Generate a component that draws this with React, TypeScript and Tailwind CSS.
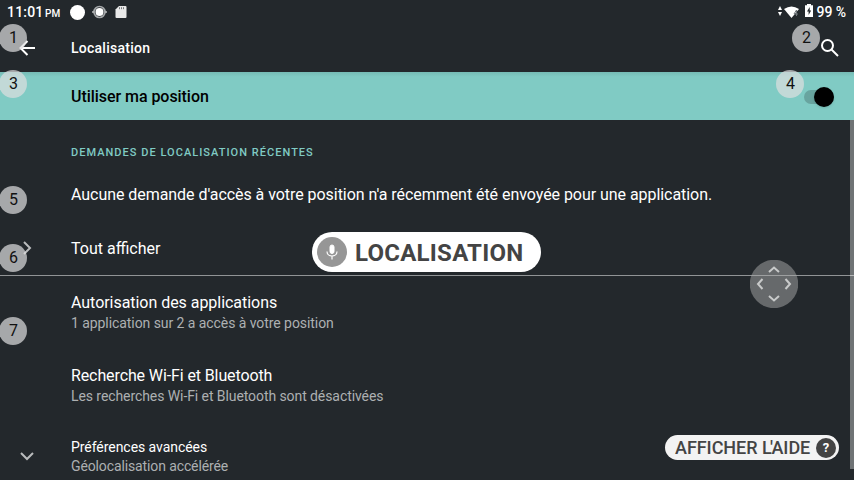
import React from "react";

function Badge({ n, className }: { n: number; className: string }) {
  return (
    <span
      className={`absolute flex size-7 items-center justify-center rounded-full bg-[#dedee0]/70 pb-px pl-px text-[16px] leading-none text-[#111] ${className}`}
    >
      {n}
    </span>
  );
}

function StatusBar() {
  return (
    <div className="flex h-6 items-center justify-between pr-2 pl-[7px] text-white">
      <div className="flex items-center">
        <span className="w-[36px] text-[14px] leading-none font-medium tracking-[0.2px] whitespace-nowrap">11:01</span>
        <span className="w-[27px] pt-[3px] pl-[2px] text-[10px] leading-none font-medium">PM</span>
        <span className="size-[15px] rounded-full bg-white" />
        <svg className="ml-[7px]" width="15" height="14" viewBox="0 0 15 14">
          <circle cx="7.5" cy="7" r="5.5" fill="none" stroke="#a5a8aa" strokeWidth="1.7" />
          <circle cx="7.5" cy="7" r="4" fill="#fff" />
          <path d="M0 7h2M13 7h2" stroke="#b9bbbc" strokeWidth="1.5" />
        </svg>
        <svg className="ml-[8px]" width="12" height="14" viewBox="0 0 12 14">
          <path d="M4 1h6.500q1 0 1 1v10q0 1-1 1H1.500q-1 0-1-1V4.500z" fill="#e9e9e9" />
          <path d="M4.500 2.200v2M6.500 2.200v2M8.500 2.200v2" stroke="#777b7d" strokeWidth="1" />
        </svg>
      </div>
      <div className="flex items-center">
        <svg className="-mt-[2px]" width="4" height="12" viewBox="0 0 4 12">
          <path d="M2 1l2 4H0zM2 11l2-4H0z" fill="#fff" />
        </svg>
        <svg className="-mt-px ml-[2px]" width="15" height="12" viewBox="0 0 15 12">
          <path d="M0 3Q7.500-2 15 3L7.500 12z" fill="#fff" />
          <path d="M12.500 4L10 8h4M12.500 4v6" fill="none" stroke="#70767a" strokeWidth="1" />
        </svg>
        <svg className="-mt-[3px] ml-[6px]" width="8" height="13" viewBox="0 0 8 13">
          <path d="M2 0h4v1.300h2V13H0V1.300h2z" fill="#fff" />
          <path d="M4.700 3L2 7.500h1.600V11L6.200 6.500H4.700z" fill="#23282c" />
        </svg>
        <span className="ml-[3px] text-[14px] leading-none font-medium tracking-[-0.05px] whitespace-nowrap">99 %</span>
      </div>
    </div>
  );
}

interface RowProps {
  title: string;
  detail: string;
  titleClass: string;
  detailClass: string;
}

function Row({ title, detail, titleClass, detailClass }: RowProps) {
  return (
    <div className="flex h-[73px] flex-col pt-[16px] pl-[71px] whitespace-nowrap">
      <span className={`text-[16px] leading-[22px] text-white ${titleClass}`}>{title}</span>
      <span className={`text-[14px] leading-[18px] text-[#adb0b2] ${detailClass}`}>{detail}</span>
    </div>
  );
}

export default function App() {
  return (
    <div className="relative h-[480px] w-[854px] overflow-hidden bg-[#23282c] font-['Roboto',sans-serif]">
      <StatusBar />
      <header className="flex h-12 items-center pl-[18px] text-white">
        <svg width="18" height="16" viewBox="0 0 18 16" fill="none" stroke="currentColor" strokeWidth="2">
          <path d="M17 8H3M9.500 1L2.500 8l7 7" />
        </svg>
        <h1 className="ml-[35px] flex-1 text-[14px] font-medium tracking-[0.25px]">Localisation</h1>
        <svg className="mr-[15px]" width="18" height="18" viewBox="0 0 18 18" fill="none" stroke="currentColor" strokeWidth="2">
          <circle cx="6.500" cy="6.500" r="5.500" />
          <path d="M10.500 10.500l6.500 6.500" />
        </svg>
      </header>
      <div className="flex h-12 items-center justify-between bg-[#80cbc4] bg-linear-to-b from-[#76bbb5] to-[#80cbc4] to-10% pt-px pr-[20px] pl-[71px]">
        <span className="text-[16px] font-medium tracking-[-0.05px] text-black">Utiliser ma position</span>
        <span className="flex h-[14px] w-[30px] items-center justify-end rounded-full bg-[#68a49f]">
          <span className="size-5 shrink-0 rounded-full bg-black shadow" />
        </span>
      </div>
      <main>
        <h2 className="flex h-12 items-center pt-[18px] pl-[71px] text-[11px] font-medium tracking-[1.03px] text-[#80cbc4]">
          DEMANDES DE LOCALISATION RÉCENTES
        </h2>
        <p className="flex h-[53px] items-center pl-[71px] text-[16px] tracking-[-0.052px] whitespace-nowrap text-white">
          Aucune demande d'accès à votre position n'a récemment été envoyée pour une application.
        </p>
        <div className="flex h-[54px] items-center pl-[20px] text-[16px] text-white">
          <svg width="14" height="14" viewBox="0 0 14 14" fill="none" stroke="#b9bbbc" strokeWidth="2">
            <path d="M4 1l6 6-6 6" />
          </svg>
          <span className="ml-[37px] pt-[2px]">Tout afficher</span>
        </div>
        <div className="h-px bg-[#919496]" />
        <Row
          title="Autorisation des applications"
          detail="1 application sur 2 a accès à votre position"
          titleClass="tracking-[-0.04px]"
          detailClass="tracking-[-0.065px]"
        />
        <Row
          title="Recherche Wi-Fi et Bluetooth"
          detail="Les recherches Wi-Fi et Bluetooth sont désactivées"
          titleClass="tracking-[-0.11px]"
          detailClass="tracking-[-0.08px]"
        />
        <div className="flex h-[58px] pt-[16px] pl-[20px] whitespace-nowrap">
          <svg className="mt-[11px]" width="14" height="14" viewBox="0 0 14 14" fill="none" stroke="#b9bbbc" strokeWidth="2">
            <path d="M1 4l6 6 6-6" />
          </svg>
          <div className="ml-[37px] flex flex-col text-[14px] leading-[19px]">
            <span className="tracking-[-0.05px] text-white">Préférences avancées</span>
            <span className="tracking-[-0.12px] text-[#adb0b2]">Géolocalisation accélérée</span>
          </div>
        </div>
      </main>

      <span className="absolute top-[120px] right-0 h-[349px] w-1 bg-white/35" />

      <Badge n={1} className="top-6 -left-px" />
      <Badge n={2} className="top-6 left-[792px]" />
      <Badge n={3} className="top-[70px] -left-px" />
      <Badge n={4} className="top-[70px] left-[776px]" />
      <Badge n={5} className="top-[186px] -left-px" />
      <Badge n={6} className="top-[244px] -left-px" />
      <Badge n={7} className="top-[317px] -left-px" />

      <div className="absolute top-[232px] left-[312px] flex h-10 w-[229px] items-center rounded-full bg-white pl-[5px]">
        <span className="flex size-[30px] items-center justify-center rounded-full bg-[#969696]">
          <svg width="12" height="16" viewBox="0 0 12 16" fill="none" stroke="#fff">
            <rect x="4" y="1" width="4" height="8.500" rx="2" fill="#fff" />
            <path d="M1 7.500c0 6 10 6 10 0M6 12v3.500" strokeWidth="1.200" />
          </svg>
        </span>
        <span className="ml-[8px] pt-[2px] text-[24px] leading-none font-bold tracking-[0.25px] text-[#444]">LOCALISATION</span>
      </div>

      <svg className="absolute top-[260px] left-[750px]" width="48" height="48" viewBox="0 0 48 48" fill="none">
        <circle cx="24" cy="24" r="24.200" fill="#aaaaaa" fillOpacity="0.500" />
        <path d="M19 12l5-4.500 5 4.500M19 36l5 4.500 5-4.500M12.500 19L8 24l4.500 5M35.500 19l4.500 5-4.500 5" stroke="#c8caca" strokeWidth="2" />
      </svg>

      <div className="absolute top-[435px] left-[665px] flex h-[25px] w-[174px] items-center justify-between rounded-full bg-[#f3f3f3] pr-[3px] pl-[10px]">
        <span className="text-[18px] leading-none font-medium tracking-[-0.05px] whitespace-nowrap text-[#444]">
          AFFICHER <span className="tracking-[-1.6px]">L'</span>AIDE
        </span>
        <span className="flex size-[20px] items-center justify-center rounded-full bg-[#444] text-[13px] leading-none font-bold text-white">?</span>
      </div>
    </div>
  );
}
